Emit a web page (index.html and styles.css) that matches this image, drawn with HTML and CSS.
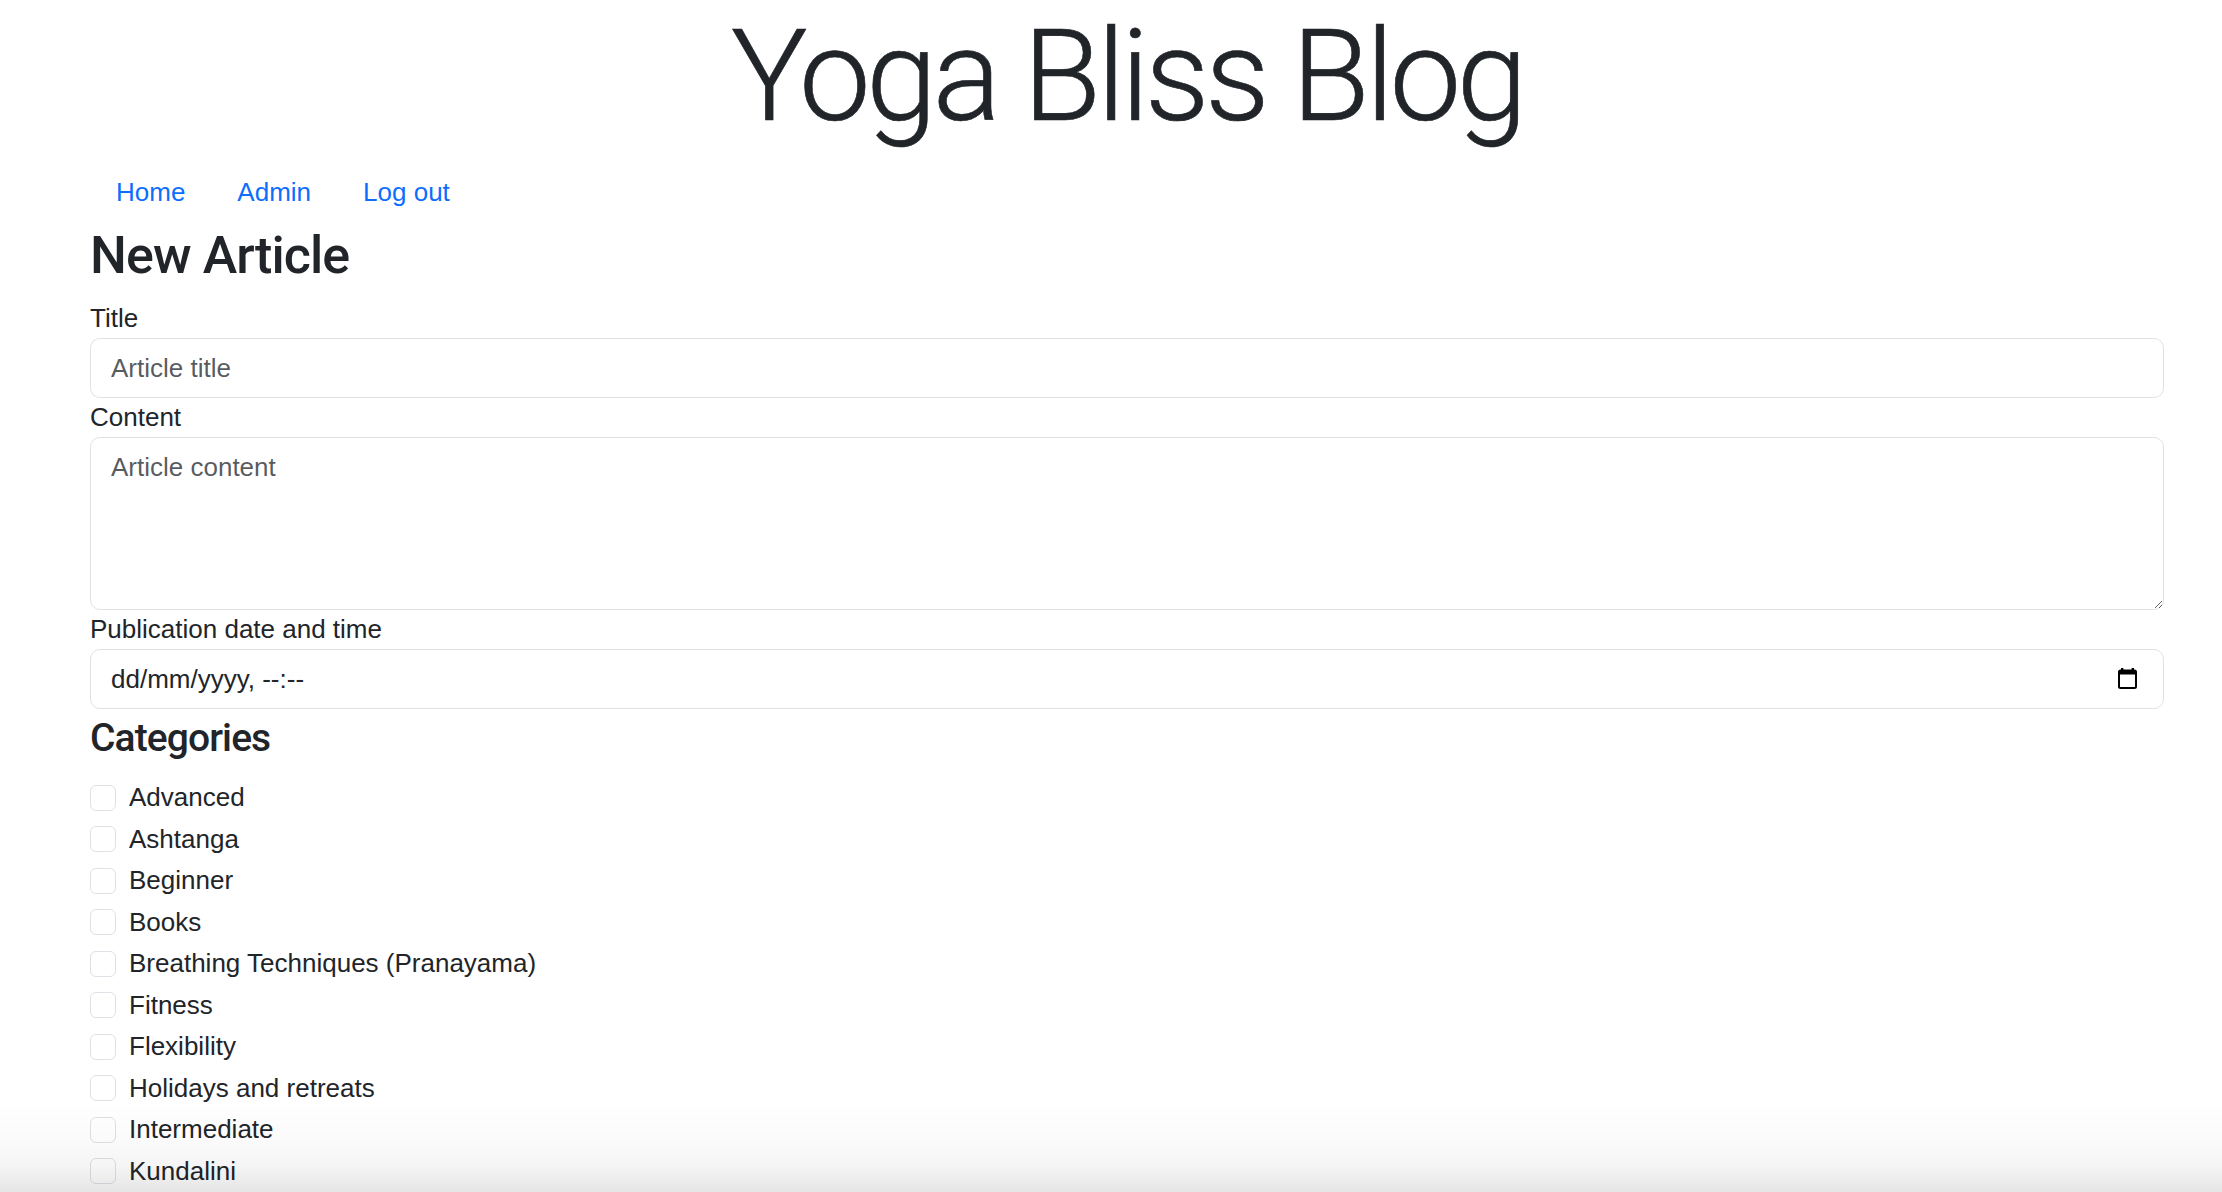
FILE: index.html
```html
<!DOCTYPE html>
<html lang="en">
<head>
<meta charset="utf-8">
<title>Yoga Bliss Blog - New Article</title>
<link rel="stylesheet" href="styles.css">
</head>
<body>
<div class="page">
  <header class="site-header">
    <h1 class="site-title">Yoga Bliss Blog</h1>
  </header>
  <nav>
    <ul class="nav">
      <li><a href="#">Home</a></li>
      <li><a href="#">Admin</a></li>
      <li><a href="#">Log out</a></li>
    </ul>
  </nav>
  <main>
    <h2 class="page-heading">New Article</h2>
    <form class="article-form">
      <div class="field">
        <label for="title">Title</label>
        <input id="title" class="control" type="text" placeholder="Article title">
      </div>
      <div class="field">
        <label for="content">Content</label>
        <textarea id="content" class="control control-area" placeholder="Article content"></textarea>
      </div>
      <div class="field">
        <label for="pubdate">Publication date and time</label>
        <div id="pubdate" class="control control-date">
          <span>dd/mm/yyyy, --:--</span>
          <svg class="cal-icon" width="19" height="21" viewBox="0 0 19 21" aria-hidden="true">
            <rect x="3" y="0" width="2.4" height="4" fill="#000"/>
            <rect x="13.6" y="0" width="2.4" height="4" fill="#000"/>
            <rect x="1" y="2.5" width="17" height="17.5" rx="1.5" fill="none" stroke="#000" stroke-width="2"/>
            <rect x="1" y="2.5" width="17" height="4" fill="#000"/>
          </svg>
        </div>
      </div>
      <h4 class="section-heading">Categories</h4>
      <div class="checks">
        <label class="check"><input type="checkbox" class="check-box"><span>Advanced</span></label>
        <label class="check"><input type="checkbox" class="check-box"><span>Ashtanga</span></label>
        <label class="check"><input type="checkbox" class="check-box"><span>Beginner</span></label>
        <label class="check"><input type="checkbox" class="check-box"><span>Books</span></label>
        <label class="check"><input type="checkbox" class="check-box"><span>Breathing Techniques (Pranayama)</span></label>
        <label class="check"><input type="checkbox" class="check-box"><span>Fitness</span></label>
        <label class="check"><input type="checkbox" class="check-box"><span>Flexibility</span></label>
        <label class="check"><input type="checkbox" class="check-box"><span>Holidays and retreats</span></label>
        <label class="check"><input type="checkbox" class="check-box"><span>Intermediate</span></label>
        <label class="check"><input type="checkbox" class="check-box"><span>Kundalini</span></label>
      </div>
    </form>
  </main>
</div>
<div class="bottom-fade"></div>
</body>
</html>
```
FILE: styles.css
```css
html {
  scrollbar-width: none;
}
html::-webkit-scrollbar,
body::-webkit-scrollbar {
  display: none;
}
html, body {
  margin: 0;
  padding: 0;
  background: #fff;
}
body {
  font-family: "Liberation Sans", Arial, sans-serif;
  font-size: 26px;
  line-height: 1.5;
  color: #212529;
}
.page {
  width: 2074px;
  margin-left: 90px;
}
.site-title {
  font-family: Roboto, "Liberation Sans", sans-serif;
  font-weight: 300;
  font-size: 128px;
  line-height: 152px;
  letter-spacing: -4.7px;
  text-align: center;
  margin: 0 0 8px;
  color: #212529;
  -webkit-text-stroke: 0.6px #212529;
}
.nav {
  display: flex;
  list-style: none;
  margin: 0;
  padding: 0;
}
.nav a {
  display: block;
  padding: 13px 26px;
  color: #0d6efd;
  text-decoration: none;
}
.page-heading {
  font-family: Roboto, "Liberation Sans", sans-serif;
  font-weight: 500;
  font-size: 52px;
  line-height: 1.2;
  letter-spacing: -0.9px;
  margin: 0 0 12px;
}
.field label {
  display: block;
}
.control {
  display: block;
  box-sizing: border-box;
  width: 100%;
  height: 60px;
  margin: 0;
  padding: 10px 20px;
  border: 1px solid #dee2e6;
  border-radius: 10px;
  background: #fff;
  font-family: inherit;
  font-size: 26px;
  line-height: 38px;
  color: #212529;
  outline: none;
}
.control::placeholder {
  color: rgba(33, 37, 41, 0.75);
}
.control-area {
  height: 173px;
  resize: vertical;
}
.control-date {
  display: flex;
  align-items: center;
  justify-content: space-between;
  padding-right: 26px;
}
.cal-icon {
  display: block;
  margin-top: -2px;
}
.section-heading {
  font-family: Roboto, "Liberation Sans", sans-serif;
  font-weight: 500;
  font-size: 39px;
  line-height: 1.2;
  letter-spacing: -0.9px;
  margin: 6px 0 16px;
}
.checks {
  display: flex;
  flex-direction: column;
}
.check {
  display: flex;
  align-items: flex-start;
  gap: 13px;
  min-height: 39px;
  margin-bottom: 2.5px;
}
.check-box {
  appearance: none;
  -webkit-appearance: none;
  flex: none;
  width: 26px;
  height: 26px;
  margin: 6.5px 0 0;
  border: 1px solid #dee2e6;
  border-radius: 6px;
  background: #fff;
  box-sizing: border-box;
}
.bottom-fade {
  position: fixed;
  left: 0;
  right: 0;
  bottom: 0;
  height: 90px;
  pointer-events: none;
  background: linear-gradient(to bottom, rgba(0, 0, 0, 0) 0%, rgba(0, 0, 0, 0.015) 40%, rgba(0, 0, 0, 0.04) 70%, rgba(0, 0, 0, 0.1) 100%);
}
```
